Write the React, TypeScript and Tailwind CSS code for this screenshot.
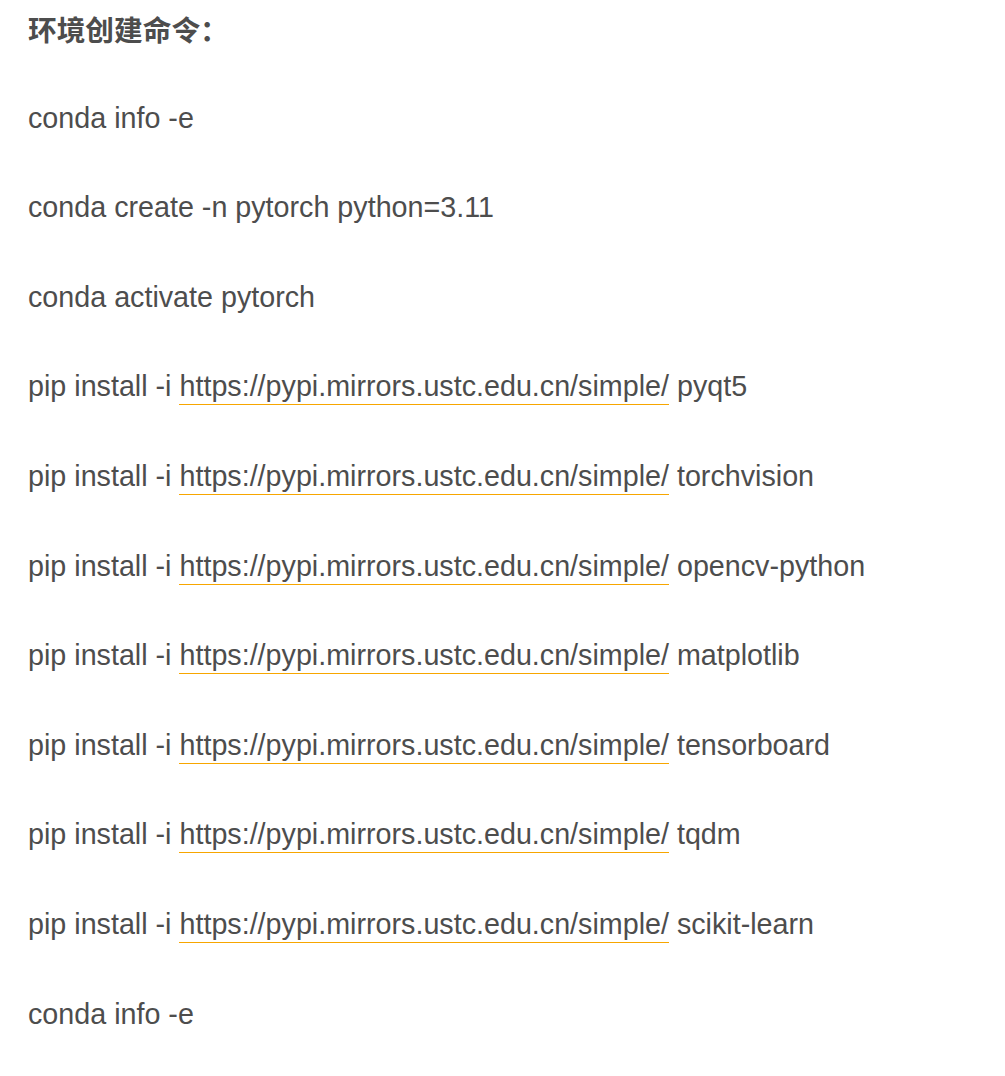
export default function App() {
  const mirror = "https://pypi.mirrors.ustc.edu.cn/simple/"
  const pkgs = ["pyqt5", "torchvision", "opencv-python", "matplotlib", "tensorboard", "tqdm", "scikit-learn"]

  return (
    <div
      className="min-h-screen bg-white px-[28px] pt-[12px] text-[28.7px] text-[#4d4d4d]"
      style={{ fontFamily: '"Liberation Sans", Arial, "Noto Sans CJK SC", sans-serif' }}
    >
      <div className="flex flex-col gap-[50.6px] leading-[39px]">
        <h2 className="-mb-[3px] text-[28.7px] font-bold" style={{ fontFamily: '"Liberation Sans", "Noto Sans CJK SC", sans-serif' }}>
          环境创建命令：
        </h2>
        <p>conda info -e</p>
        <p>conda create -n pytorch python=3.11</p>
        <p>conda activate pytorch</p>
        {pkgs.map((p) => (
          <p key={p}>
            pip install -i{" "}
            <a href="#" className="border-b border-[#f7a600] pb-[2px]">
              {mirror}
            </a>{" "}
            {p}
          </p>
        ))}
        <p>conda info -e</p>
      </div>
    </div>
  )
}
